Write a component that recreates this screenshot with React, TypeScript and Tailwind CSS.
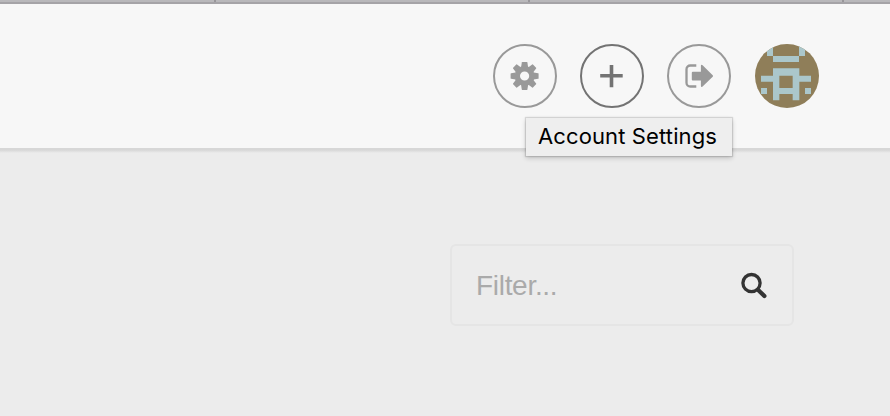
import type { ReactNode } from "react";

function CircleButton({ label, tone, children }: { label: string; tone: string; children: ReactNode }) {
  return (
    <button aria-label={label} className={`size-16 shrink-0 rounded-full border-2 ${tone}`}>
      <svg viewBox="2 2 60 60" className="block size-[60px]" fill="currentColor">
        {children}
      </svg>
    </button>
  );
}

const teeth = [0, 45, 90, 135, 180, 225, 270, 315];

function Gear() {
  return (
    <g transform="translate(31.6 32)">
      <circle r="7.3" fill="none" stroke="currentColor" strokeWidth="5.4" />
      {teeth.map((angle) => (
        <path key={angle} d="M-3.5-9L-2.8-13.5Q-2.7-14-2.2-14H2.2Q2.7-14 2.8-13.5L3.5-9Z" transform={`rotate(${angle})`} />
      ))}
    </g>
  );
}

function Avatar() {
  return (
    <svg viewBox="24 24 192 192" className="size-16 shrink-0 rounded-full bg-[#8f7e59]" fill="#abc7cb">
      <path d="M60 24h18v36H60zM156 24h18v36h-18zM78 60h78v18H78z" />
      <path fillRule="evenodd" d="M78 97h79v22h35v18h-35v56h-20v-19H97v19H78v-56H42v-18h36zM97 119v37h40v-37z" />
      <path d="M42 156h18v18H42zM174 156h18v18h-18z" />
    </svg>
  );
}

export default function App() {
  return (
    <div className="flex h-[416px] w-[890px] flex-col overflow-hidden bg-[#ececec]">
      <div className="flex h-1 shrink-0 border-b-2 border-[#a5a3a7] bg-[#b9b8bb]">
        <div className="w-[216px] border-r-2 border-[#98969a]" />
        <div className="w-[314px] border-r-2 border-[#98969a]" />
        <div className="w-[314px] border-r-2 border-[#98969a]" />
      </div>
      <header className="flex h-36 shrink-0 items-center justify-end bg-[#f7f7f7] pt-1 pr-[71px]">
        <div className="flex gap-[23px]">
          <div className="relative">
            <CircleButton label="Account Settings" tone="border-[#999999] text-[#999999]">
              <Gear />
            </CircleButton>
            <div className="absolute top-[74px] left-[33px] flex h-[38px] w-[206px] items-center bg-[#eeeeee] pb-0.5 pl-3 font-['Inter','Liberation_Sans',sans-serif] text-[22px] leading-none tracking-[0.12px] whitespace-nowrap text-black shadow-[0_0_1px_1px_rgba(0,0,0,0.12),0_2px_5px_rgba(0,0,0,0.2)]">
              Account Settings
            </div>
          </div>
          <CircleButton label="Add" tone="border-[#737373] text-[#737373]">
            <path d="M29.7 21h3.6v9h9.4v3.6h-9.4v9.6h-3.6v-9.6h-9.5V30h9.5z" />
          </CircleButton>
          <CircleButton label="Log out" tone="border-[#999999] text-[#999999]">
            <path d="M29.3 21.5h-6a3.8 3.8 0 0 0-3.8 3.8v13.4a3.8 3.8 0 0 0 3.8 3.8h6" fill="none" stroke="currentColor" strokeWidth="2.3" />
            <path d="M25.7 27.8h8.2v-5.7q0-2.2 1.7-.8L45.7 31.2q.8.8 0 1.6L35.6 42.4q-1.7 1.4-1.7-.8v-5.2h-8.2q-.9 0-.9-.9v-6.8q0-.9.9-.9z" />
          </CircleButton>
          <div className="ml-px">
            <Avatar />
          </div>
        </div>
      </header>
      <div className="h-[5px] shrink-0 bg-linear-to-b from-[#d7d7d7] from-40% to-[#ececec]" />
      <main className="flex justify-end pt-[91px] pr-24">
        <div className="flex h-[82px] w-[344px] items-center justify-between rounded-md border-2 border-[#e5e5e5] pt-0.5 pr-6 pl-6">
          <input
            aria-label="Filter"
            placeholder="Filter..."
            className="w-40 bg-transparent font-['Liberation_Sans',Arial,sans-serif] text-[28px] tracking-[-0.3px] text-[#333333] outline-none placeholder:text-[#aaaaaa]"
          />
          <svg viewBox="0 0 28 28" className="size-7" fill="none" stroke="#333333">
            <circle cx="11.5" cy="11.1" r="8.6" strokeWidth="3.3" />
            <path d="M18.2 17.9l6.2 6.2" strokeWidth="4.2" strokeLinecap="round" />
          </svg>
        </div>
      </main>
    </div>
  );
}
